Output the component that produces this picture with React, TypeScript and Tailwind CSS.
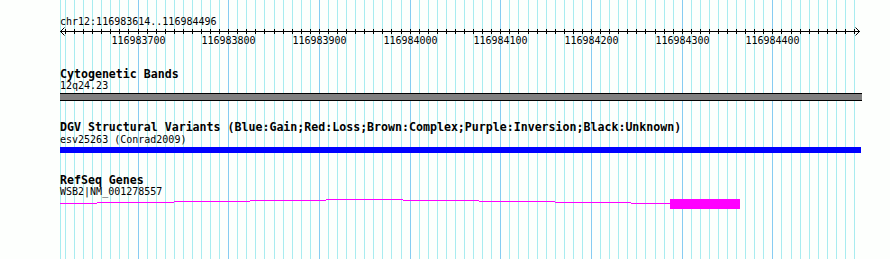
const START = 116983614;
const END = 116984496;
const LEFT = 60;
const WIDTH = 800;
const SCALE = WIDTH / (END - START);

const toX = (pos: number) => Math.floor(LEFT + (pos - START) * SCALE);

// every 10 bp inside the view
const GRID: number[] = [];
for (let p = Math.ceil(START / 10) * 10; p <= END - 1; p += 10) GRID.push(p);
const MAJOR = GRID.filter((p) => p % 100 === 0);

// intron "hat" line, drawn as pixel steps like the server image
const INTRON_STEPS: [number, number, number][] = [
  [60, 97, 203],
  [97, 174, 202],
  [174, 250, 201],
  [250, 326, 200],
  [326, 403, 199],
  [403, 479, 200],
  [479, 555, 201],
  [555, 631, 202],
  [631, 670, 203],
];

const MONO = "'DejaVu Sans Mono', 'Liberation Mono', monospace";

function GridLines() {
  return (
    <svg className="absolute inset-0" width={890} height={259} shapeRendering="crispEdges">
      <rect x={LEFT} y={0} width={1} height={259} fill="#a8ecf0" />
      {GRID.map((p) => (
        <rect
          key={p}
          x={toX(p)}
          y={0}
          width={1}
          height={259}
          fill={p % 100 === 0 ? "#86ccf2" : "#a8ecf0"}
        />
      ))}
    </svg>
  );
}

function Ruler() {
  return (
    <svg className="block" width={890} height={48} shapeRendering="crispEdges">
      <text x={LEFT} y={25} fontFamily={MONO} fontSize={10} fill="#000">
        chr12:116983614..116984496
      </text>
      <rect x={LEFT} y={31} width={WIDTH} height={1} fill="#000" />
      {GRID.map((p) => (
        <rect key={p} x={toX(p)} y={29} width={1} height={5} fill="#000" />
      ))}
      <polyline points="64.5,27.5 60.5,31.5 64.5,35.5" fill="none" stroke="#000" strokeWidth={1} shapeRendering="auto" />
      <polyline points="855.5,27.5 859.5,31.5 855.5,35.5" fill="none" stroke="#000" strokeWidth={1} shapeRendering="auto" />
      {MAJOR.map((p) => (
        <text
          key={p}
          x={toX(p) + 0.5}
          y={44}
          textAnchor="middle"
          fontFamily={MONO}
          fontSize={10}
          fill="#000"
        >
          {p}
        </text>
      ))}
    </svg>
  );
}

function TrackTitle({ children }: { children: React.ReactNode }) {
  return (
    <div className="whitespace-nowrap font-['DejaVu_Sans_Mono','Liberation_Mono',monospace] text-[11.6px] font-bold leading-[12px] text-black">
      {children}
    </div>
  );
}

function FeatureLabel({ children }: { children: React.ReactNode }) {
  return (
    <div className="whitespace-nowrap font-['DejaVu_Sans_Mono','Liberation_Mono',monospace] text-[10px] leading-[11px] text-black">
      {children}
    </div>
  );
}

function GeneGlyph() {
  return (
    <svg className="mt-[2px] block" width={830} height={10} shapeRendering="crispEdges">
      {INTRON_STEPS.map(([x1, x2, y]) => (
        <rect key={x1} x={x1 - LEFT} y={y - 199} width={x2 - x1} height={1} fill="#ff00ff" />
      ))}
      <rect x={670 - LEFT} y={0} width={70} height={10} fill="#ff00ff" />
    </svg>
  );
}

export default function App() {
  return (
    <div className="relative h-[259px] w-[890px] overflow-hidden bg-[#fdfffd]">
      <GridLines />
      <div className="relative">
        <Ruler />
        <div className="flex flex-col pl-[60px] pt-[20px]">
          {/* cytogenetic bands */}
          <TrackTitle>Cytogenetic Bands</TrackTitle>
          <FeatureLabel>12q24.23</FeatureLabel>
          <div className="mt-[2px] h-[8px] w-[802px] border-y border-black bg-[#808080]" />

          {/* DGV */}
          <div className="mt-[20px]">
            <TrackTitle>
              DGV Structural Variants (Blue:Gain;Red:Loss;Brown:Complex;Purple:Inversion;Black:Unknown)
            </TrackTitle>
          </div>
          <div className="mt-px">
            <FeatureLabel>esv25263 (Conrad2009)</FeatureLabel>
          </div>
          <div className="mt-[2px] h-[6px] w-[801px] bg-[#0000ff]" />

          {/* RefSeq */}
          <div className="mt-[21px]">
            <TrackTitle>RefSeq Genes</TrackTitle>
          </div>
          <FeatureLabel>WSB2|NM_001278557</FeatureLabel>
          <GeneGlyph />
        </div>
      </div>
    </div>
  );
}
